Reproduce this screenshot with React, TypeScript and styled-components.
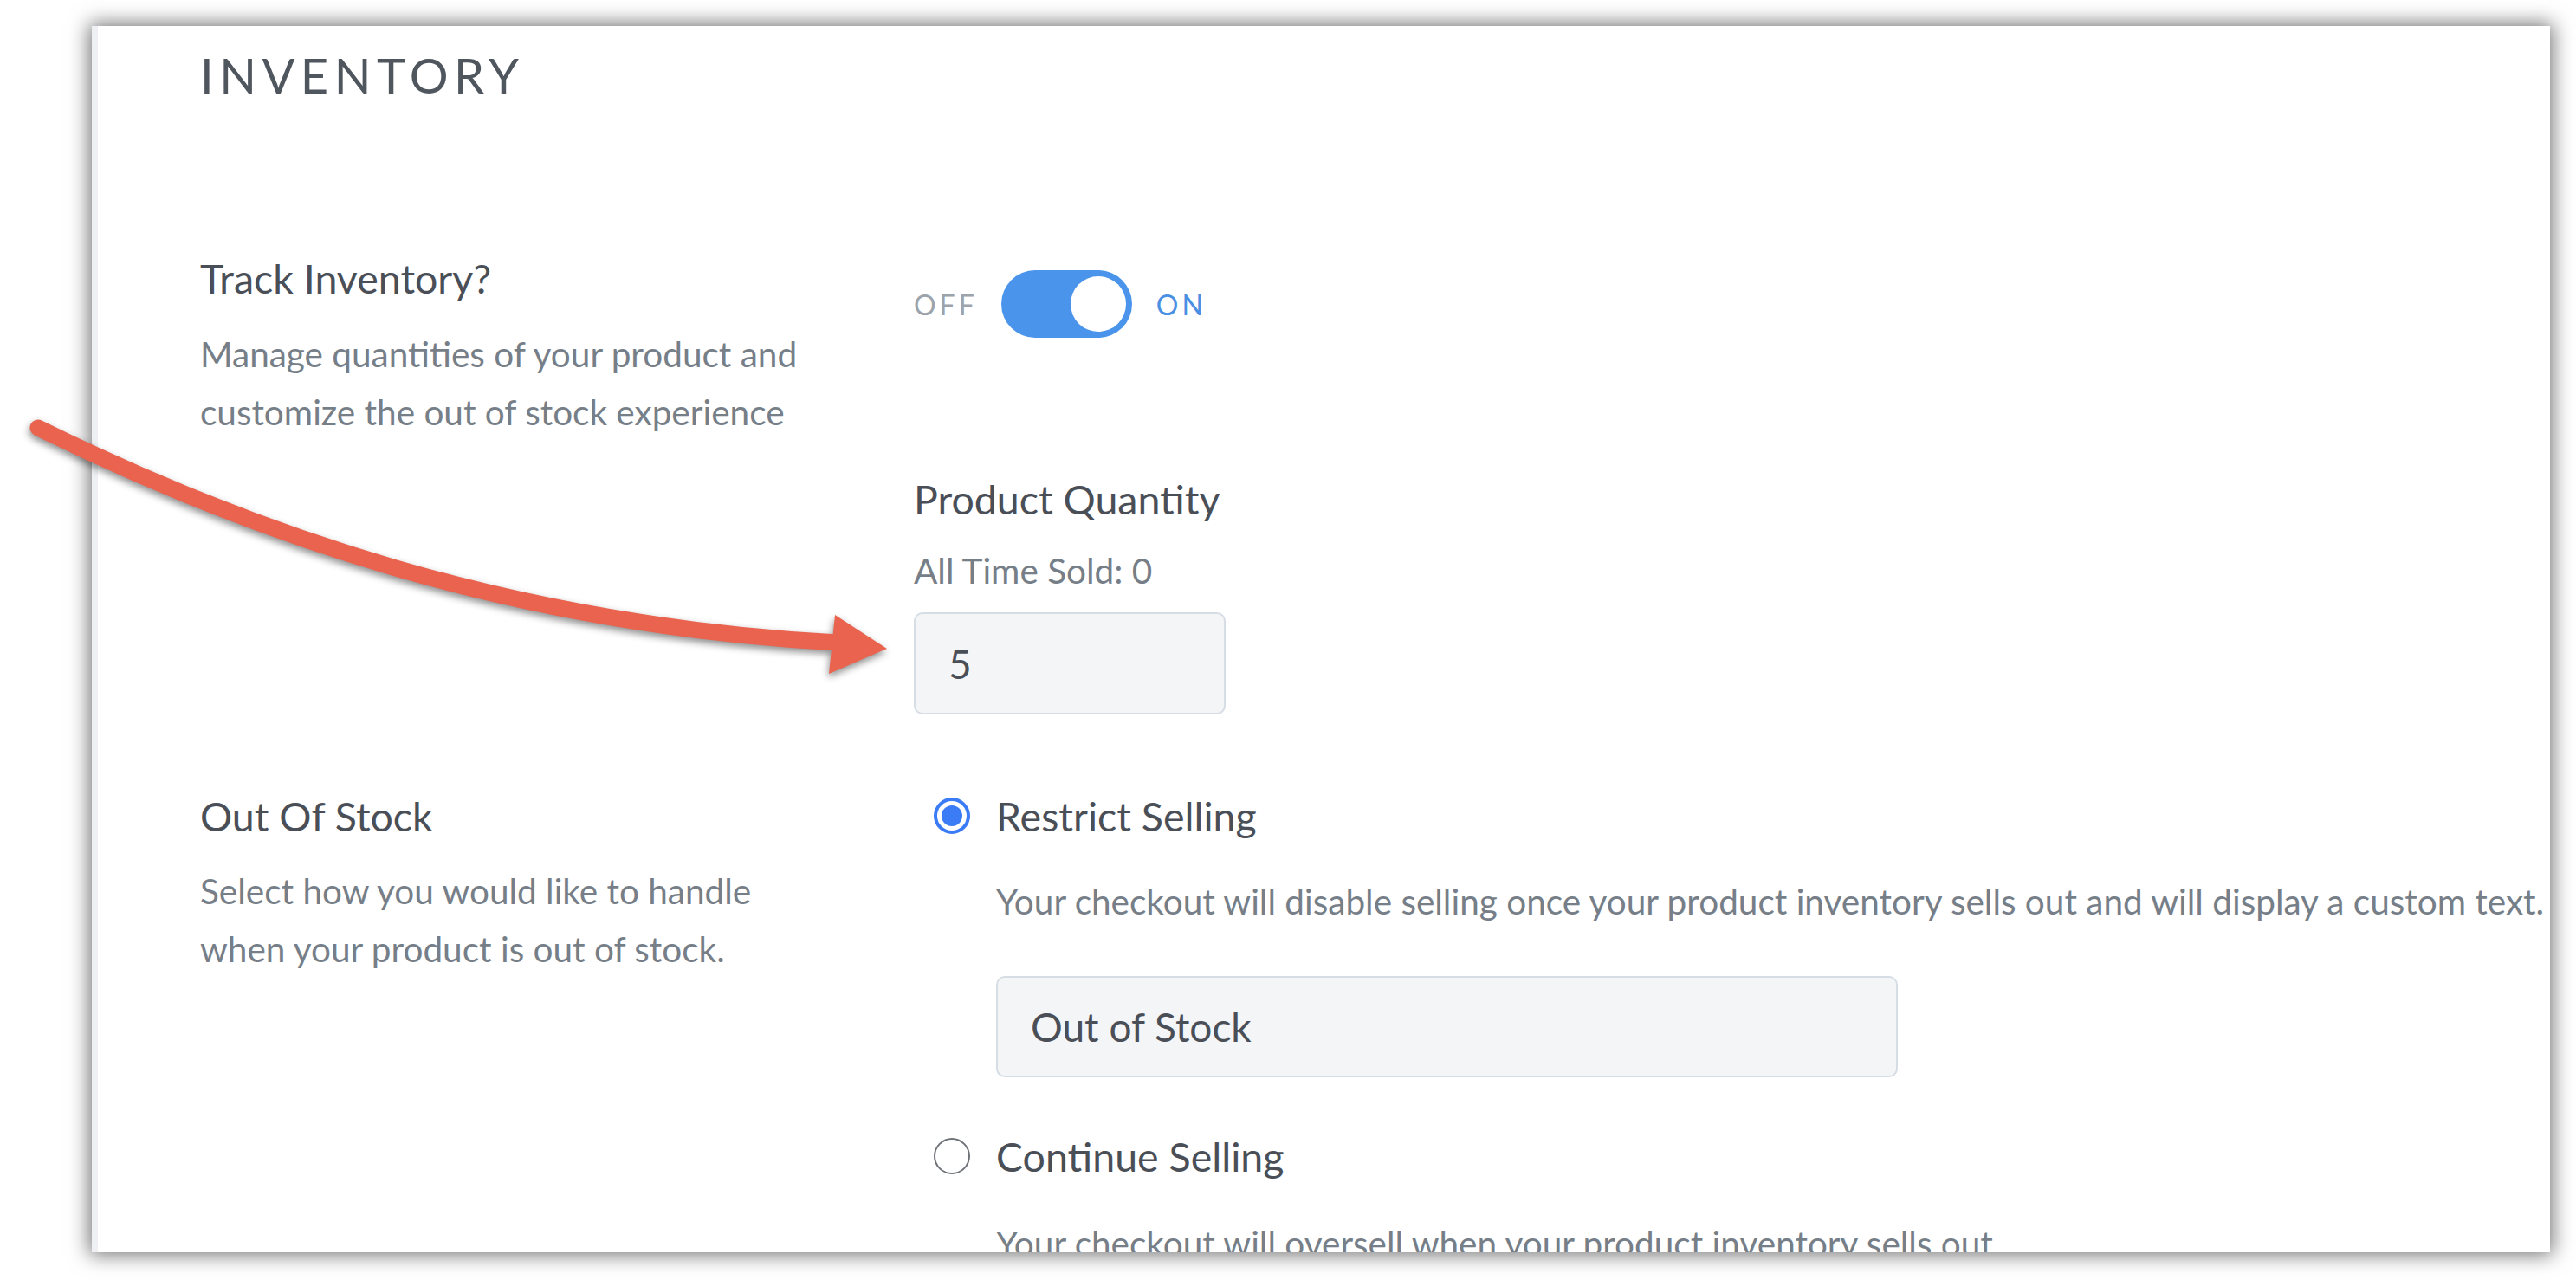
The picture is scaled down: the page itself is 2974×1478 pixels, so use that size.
import * as React from "react";
import styled, { createGlobalStyle } from "styled-components";

const GlobalStyle = createGlobalStyle`
  html, body {
    margin: 0;
    padding: 0;
    background: #ffffff;
  }

  body {
    font-family: Lato, "Noto Sans", sans-serif;
    -webkit-font-smoothing: antialiased;
  }
`;

const Page = styled.div`
  position: relative;
  box-sizing: border-box;
  width: 2974px;
  height: 1478px;
  padding: 30px 30px 0 106px;
  overflow: hidden;
  background: #ffffff;
`;

const Panel = styled.section`
  box-sizing: border-box;
  height: 1416px;
  padding: 29px 0 0 118px;
  background: #ffffff;
  border-left: 7px solid #eef0f3;
  box-shadow: 0 0 22px 3px rgba(0, 0, 0, 0.55);
  overflow: hidden;
`;

const Title = styled.h2`
  margin: 0;
  font-size: 56px;
  line-height: 56px;
  font-weight: 400;
  letter-spacing: 6.5px;
  color: #50565e;
`;

const Row = styled.div<{ $top: number }>`
  display: grid;
  grid-template-columns: 824px 1fr;
  margin-top: ${({ $top }) => $top}px;
`;

const Column = styled.div`
  display: flex;
  flex-direction: column;
  align-items: flex-start;
`;

const Label = styled.div`
  font-size: 46.5px;
  line-height: 56px;
  color: #4a4f57;
  white-space: nowrap;
`;

const Description = styled.p<{ $top: number; $lh?: number }>`
  margin: ${({ $top }) => $top}px 0 0;
  font-size: 40.5px;
  line-height: ${({ $lh }) => $lh ?? 67}px;
  color: #767e88;
  white-space: nowrap;
`;

const ToggleRow = styled.div`
  display: flex;
  align-items: center;
  margin-top: 19px;
`;

const ToggleText = styled.span<{ $active?: boolean }>`
  font-size: 32px;
  letter-spacing: 4px;
  color: ${({ $active }) => ($active ? "#4a90e2" : "#9ca3ab")};
`;

const Track = styled.div`
  display: flex;
  justify-content: flex-end;
  align-items: center;
  box-sizing: border-box;
  width: 151px;
  height: 78px;
  margin: 0 28px 0 27px;
  padding: 0 7px;
  border-radius: 39px;
  background: #4a94ec;
`;

const Knob = styled.div`
  width: 64px;
  height: 64px;
  border-radius: 50%;
  background: #ffffff;
`;

const Field = styled.div<{ $width: number; $height: number; $top: number }>`
  display: flex;
  align-items: center;
  box-sizing: border-box;
  width: ${({ $width }) => $width}px;
  height: ${({ $height }) => $height}px;
  margin-top: ${({ $top }) => $top}px;
  padding-left: 38px;
  background: #f4f5f7;
  border: 2px solid #d7dde4;
  border-radius: 10px;
  font-size: 46px;
  color: #4a4f57;
`;

const Option = styled.div<{ $top?: number }>`
  display: flex;
  align-items: center;
  gap: 30px;
  height: 56px;
  margin: ${({ $top }) => $top ?? 0}px 0 0 23px;
`;

const Radio = styled.span<{ $checked?: boolean }>`
  display: flex;
  align-items: center;
  justify-content: center;
  box-sizing: border-box;
  width: 42px;
  height: 42px;
  border-radius: 50%;
  border: ${({ $checked }) =>
    $checked ? "4px solid #3b7cf6" : "2.5px solid #6f7378"};

  &::after {
    content: "";
    display: ${({ $checked }) => ($checked ? "block" : "none")};
    width: 24px;
    height: 24px;
    border-radius: 50%;
    background: #3b7cf6;
  }
`;

const Indent = styled.div`
  padding-left: 95px;
`;

const Arrow = styled.svg`
  position: absolute;
  top: 0;
  left: 0;
  pointer-events: none;
  filter: drop-shadow(-1px 4px 4px rgba(0, 0, 0, 0.45));
`;

const App: React.FC = () => {
  return (
    <>
      <GlobalStyle />
      <Page>
        <Panel>
          <Title>INVENTORY</Title>

          <Row $top={178}>
            <Column>
              <Label>Track Inventory?</Label>
              <Description $top={26}>
                Manage quantities of your product and
                <br />
                customize the out of stock experience
              </Description>
            </Column>
            <Column>
              <ToggleRow>
                <ToggleText>OFF</ToggleText>
                <Track>
                  <Knob />
                </Track>
                <ToggleText $active>ON</ToggleText>
              </ToggleRow>
            </Column>
          </Row>

          <Row $top={39}>
            <div />
            <Column>
              <Label>Product Quantity</Label>
              <Description $top={31} $lh={48}>
                All Time Sold: 0
              </Description>
              <Field $width={360} $height={118} $top={24}>
                5
              </Field>
            </Column>
          </Row>

          <Row $top={89}>
            <Column>
              <Label>Out Of Stock</Label>
              <Description $top={25}>
                Select how you would like to handle
                <br />
                when your product is out of stock.
              </Description>
            </Column>
            <Column>
              <Option>
                <Radio $checked />
                <Label>Restrict Selling</Label>
              </Option>
              <Indent>
                <Description $top={42} $lh={58}>
                  Your checkout will disable selling once your product
                  inventory sells out and will display a custom text.
                </Description>
                <Field $width={1041} $height={117} $top={57}>
                  Out of Stock
                </Field>
              </Indent>
              <Option $top={63}>
                <Radio />
                <Label>Continue Selling</Label>
              </Option>
              <Indent>
                <Description $top={44} $lh={58}>
                  Your checkout will oversell when your product inventory
                  sells out.
                </Description>
              </Indent>
            </Column>
          </Row>
        </Panel>

        <Arrow width="1100" height="820" viewBox="0 0 1100 820">
          <path
            d="M44 494 C 290 615, 590 722, 968 742"
            fill="none"
            stroke="#e9634f"
            strokeWidth="19"
            strokeLinecap="round"
          />
          <polygon points="1024,749 964,710 957,778" fill="#e9634f" />
        </Arrow>
      </Page>
    </>
  );
};

export default App;
